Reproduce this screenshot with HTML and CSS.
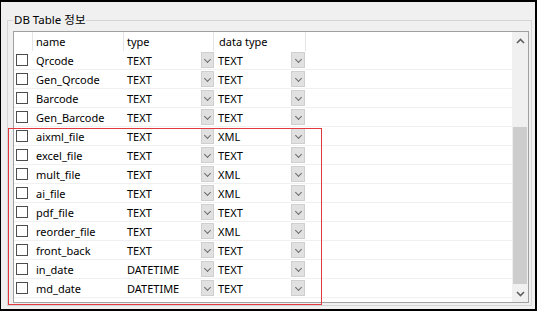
FILE: index.html
```html
<!DOCTYPE html>
<html lang="ko">
  <head>
    <meta charset="utf-8">
    <title>DB Table 정보</title>
    <link rel="stylesheet" href="styles.css">
  </head>
  <body>
    <div class="frame">
      <fieldset class="group">
        <legend>DB Table 정보</legend>
        <div class="grid">
          <div class="table">
            <div class="row head">
              <div class="cell chk"></div>
              <div class="cell name">name</div>
              <div class="cell type">type</div>
              <div class="cell dtype">data type</div>
              <div class="cell rest"></div>
            </div>
            <!-- rows -->
            <div class="row"><div class="cell chk"><span class="box"></span></div><div class="cell name">Qrcode</div><div class="cell type"><span>TEXT</span><span class="drop"></span></div><div class="cell dtype"><span>TEXT</span><span class="drop"></span></div><div class="cell rest"></div></div>
            <div class="row"><div class="cell chk"><span class="box"></span></div><div class="cell name">Gen_Qrcode</div><div class="cell type"><span>TEXT</span><span class="drop"></span></div><div class="cell dtype"><span>TEXT</span><span class="drop"></span></div><div class="cell rest"></div></div>
            <div class="row"><div class="cell chk"><span class="box"></span></div><div class="cell name">Barcode</div><div class="cell type"><span>TEXT</span><span class="drop"></span></div><div class="cell dtype"><span>TEXT</span><span class="drop"></span></div><div class="cell rest"></div></div>
            <div class="row"><div class="cell chk"><span class="box"></span></div><div class="cell name">Gen_Barcode</div><div class="cell type"><span>TEXT</span><span class="drop"></span></div><div class="cell dtype"><span>TEXT</span><span class="drop"></span></div><div class="cell rest"></div></div>
            <div class="row"><div class="cell chk"><span class="box"></span></div><div class="cell name">aixml_file</div><div class="cell type"><span>TEXT</span><span class="drop"></span></div><div class="cell dtype"><span>XML</span><span class="drop"></span></div><div class="cell rest"></div></div>
            <div class="row"><div class="cell chk"><span class="box"></span></div><div class="cell name">excel_file</div><div class="cell type"><span>TEXT</span><span class="drop"></span></div><div class="cell dtype"><span>TEXT</span><span class="drop"></span></div><div class="cell rest"></div></div>
            <div class="row"><div class="cell chk"><span class="box"></span></div><div class="cell name">mult_file</div><div class="cell type"><span>TEXT</span><span class="drop"></span></div><div class="cell dtype"><span>XML</span><span class="drop"></span></div><div class="cell rest"></div></div>
            <div class="row"><div class="cell chk"><span class="box"></span></div><div class="cell name">ai_file</div><div class="cell type"><span>TEXT</span><span class="drop"></span></div><div class="cell dtype"><span>XML</span><span class="drop"></span></div><div class="cell rest"></div></div>
            <div class="row"><div class="cell chk"><span class="box"></span></div><div class="cell name">pdf_file</div><div class="cell type"><span>TEXT</span><span class="drop"></span></div><div class="cell dtype"><span>TEXT</span><span class="drop"></span></div><div class="cell rest"></div></div>
            <div class="row"><div class="cell chk"><span class="box"></span></div><div class="cell name">reorder_file</div><div class="cell type"><span>TEXT</span><span class="drop"></span></div><div class="cell dtype"><span>XML</span><span class="drop"></span></div><div class="cell rest"></div></div>
            <div class="row"><div class="cell chk"><span class="box"></span></div><div class="cell name">front_back</div><div class="cell type"><span>TEXT</span><span class="drop"></span></div><div class="cell dtype"><span>TEXT</span><span class="drop"></span></div><div class="cell rest"></div></div>
            <div class="row"><div class="cell chk"><span class="box"></span></div><div class="cell name">in_date</div><div class="cell type"><span>DATETIME</span><span class="drop"></span></div><div class="cell dtype"><span>TEXT</span><span class="drop"></span></div><div class="cell rest"></div></div>
            <div class="row"><div class="cell chk"><span class="box"></span></div><div class="cell name">md_date</div><div class="cell type"><span>DATETIME</span><span class="drop"></span></div><div class="cell dtype"><span>TEXT</span><span class="drop"></span></div><div class="cell rest"></div></div>
          </div>
          <!-- vertical scrollbar -->
          <div class="vscroll">
            <div class="arrow">
              <svg width="9" height="6" viewBox="0 0 9 6"><path d="M1 5 L4.5 1.5 L8 5" fill="none" stroke="#606060" stroke-width="1.6"/></svg>
            </div>
            <div class="track"><div class="thumb"></div></div>
            <div class="arrow">
              <svg width="9" height="6" viewBox="0 0 9 6"><path d="M1 1 L4.5 4.5 L8 1" fill="none" stroke="#606060" stroke-width="1.6"/></svg>
            </div>
          </div>
        </div>
      </fieldset>
      <div class="mark"></div>
    </div>
  </body>
</html>
```

FILE: styles.css
```css
*{
  margin: 0;
  padding: 0;
  box-sizing: border-box;
}

body{
  width: 537px;
  height: 311px;
  font-family: "Noto Sans", "Noto Sans CJK KR", sans-serif;
  font-size: 11px;
  color: #000;
  background: #000;
}

/* black window edge */
.frame{
  position: relative;
  height: 311px;
  border-top: 2px solid #000;
  border-left: 1px solid #000;
  border-right: 2px solid #000;
  border-bottom: 2px solid #000;
  background: #f0f0f0;
  padding: 10px 3px 2px 6px;
}

.group{
  border: 1px solid #d5d5d5;
  padding: 3px 2px 2px 5px;
}

.group legend{
  padding: 0 1px;
  line-height: 16px;
  font-size: 11.5px;
}

/* the grid panel */
.grid{
  display: flex;
  height: 272px;
  border: 1px solid #a0a0a0;
  background: #fff;
}

.table{
  flex: 1;
}

.row{
  display: grid;
  grid-template-columns: 19px 91px 90px 92px 1fr;
  height: 19px;
  border-bottom: 1px solid #f0f0f0;
}

.row.head{
  border-bottom: none;
}

.cell{
  display: flex;
  align-items: center;
  justify-content: space-between;
  white-space: nowrap;
}

.head .cell{
  border-right: 1px solid #e5e5e5;
}

.head .rest{
  border-right: none;
}

.name{
  padding-left: 3px;
}

.type{
  padding-left: 3px;
}

.dtype{
  padding-left: 4px;
  padding-right: 1px;
}

.head .dtype{
  padding-left: 5px;
}

.chk{
  padding-left: 2px;
}

.box{
  width: 12px;
  height: 12px;
  border: 1px solid #4d4d4d;
  background: #fff;
}

.drop{
  width: 13px;
  height: 16px;
  background: #e1e1e1;
  border: 1px solid #cfcfcf;
  display: flex;
  align-items: center;
  justify-content: center;
}

.dtype .drop{
  width: 14px;
}

.drop::after{
  content: "";
  width: 4px;
  height: 4px;
  border-right: 1px solid #6a6a6a;
  border-bottom: 1px solid #6a6a6a;
  transform: translateY(-1px) rotate(45deg);
}

/* scrollbar */
.vscroll{
  width: 16px;
  display: flex;
  flex-direction: column;
  background: #f0f0f0;
}

.arrow{
  height: 17px;
  display: flex;
  align-items: center;
  justify-content: center;
}

.track{
  flex: 1;
  padding-top: 78px;
  padding-left: 1px;
  padding-right: 1px;
}

.thumb{
  height: 157px;
  background: #cdcdcd;
}

/* red selection marker drawn over the grid */
.mark{
  position: absolute;
  left: 7px;
  top: 126px;
  width: 314px;
  height: 177px;
  border: 1px solid #e03a40;
  pointer-events: none;
}
```
